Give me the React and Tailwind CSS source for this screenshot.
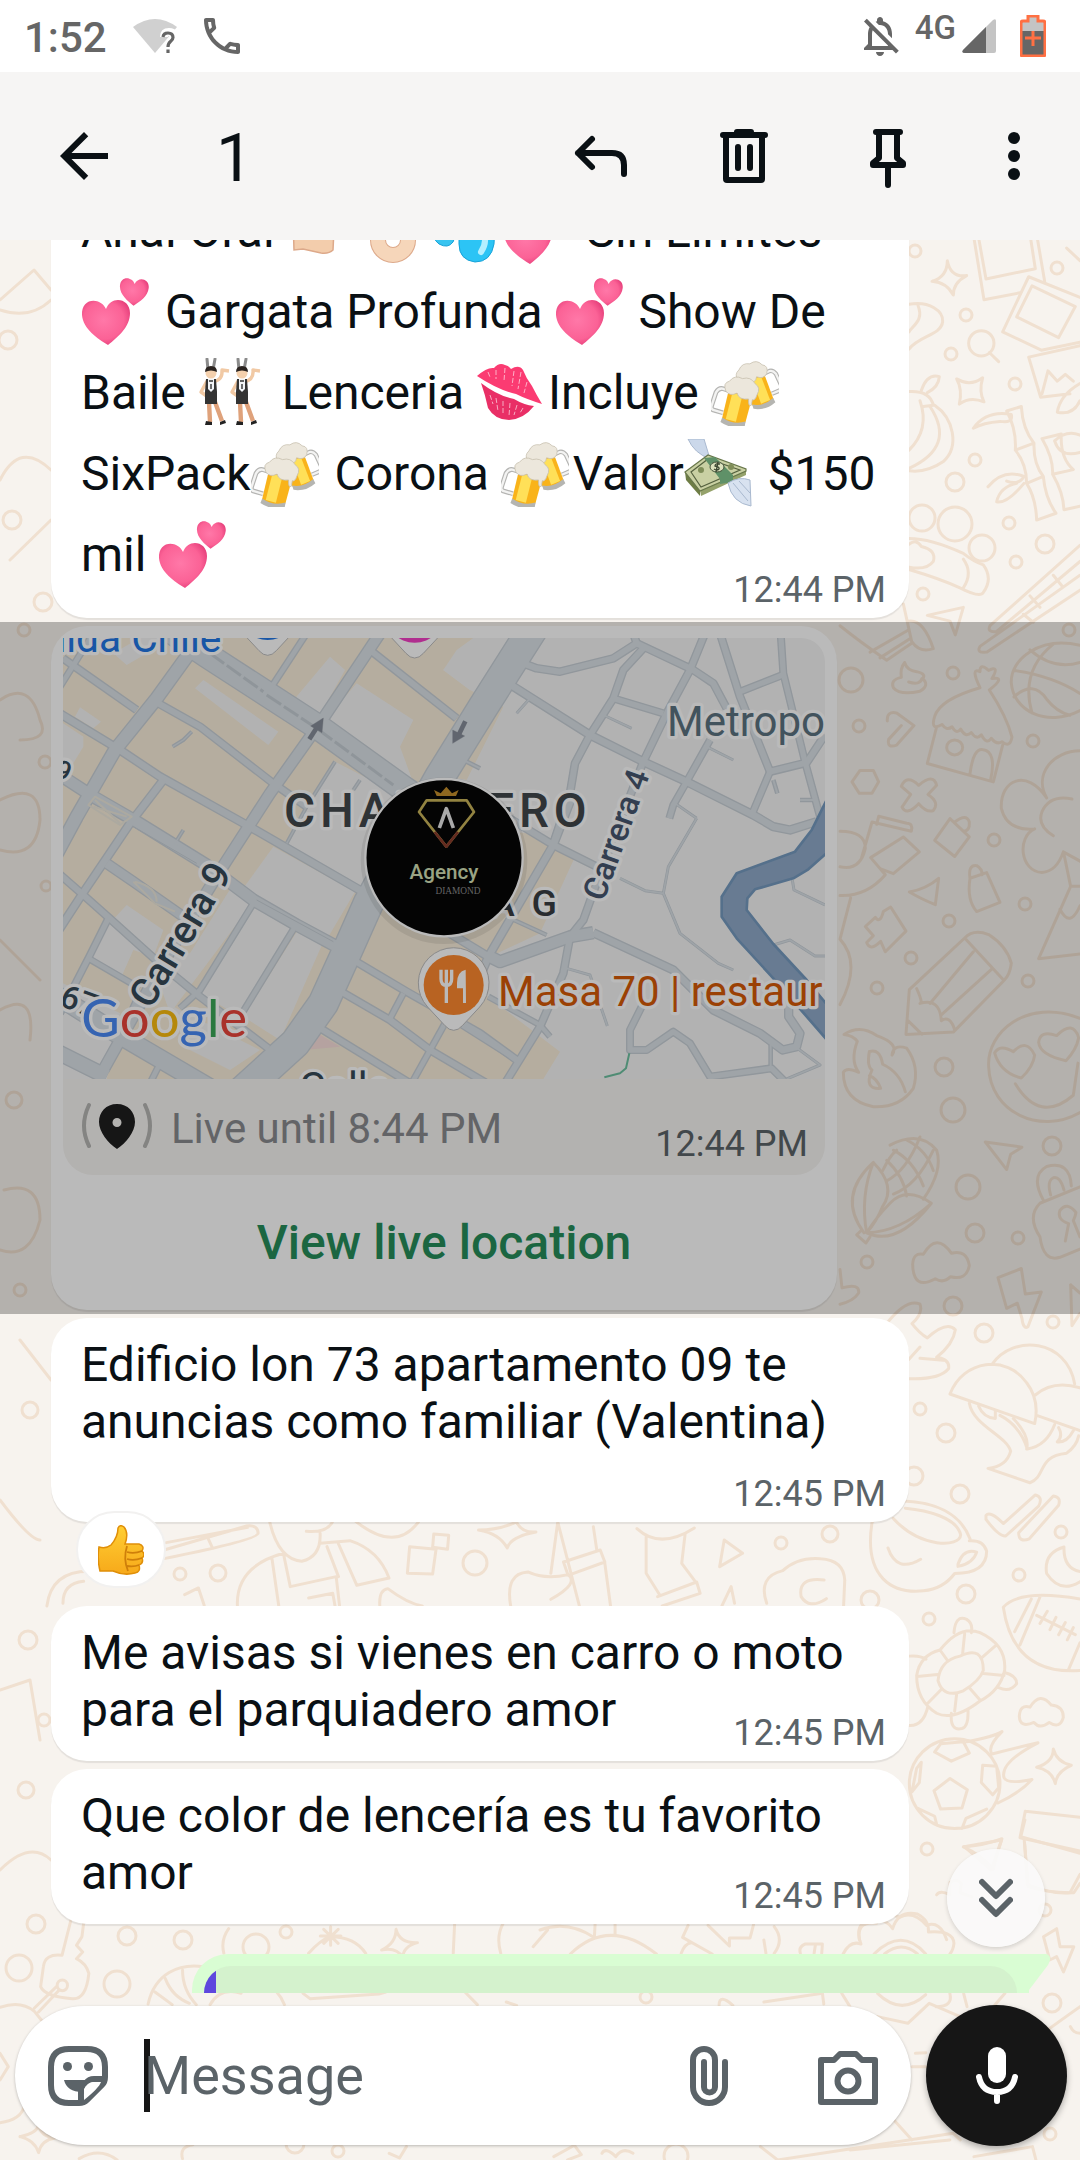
import { MdArrowBack, MdOutlineCall, MdOutlineNotificationsOff } from 'react-icons/md';

/* ---------- Emoji ---------- */

const HEART = 'M0 -10 C-5 -22 -25 -22 -24 -4 C-23 10 -8 20 2 26 C12 18 24 8 24 -6 C24 -21 5 -24 0 -10 Z';

function Emoji({ label, children }) {
  return (
    <svg role="img" aria-label={label} viewBox="0 0 68 68" className="inline-block h-[68px] w-[68px] mr-[4px] align-[-17px]">
      {children}
    </svg>
  );
}

function Hearts() {
  return (
    <Emoji label="two hearts">
      <defs>
        <radialGradient id="pink" cx="0.45" cy="0.45" r="0.6">
          <stop offset="0" stopColor="#ff78a8" />
          <stop offset="0.7" stopColor="#fb6296" />
          <stop offset="1" stopColor="#e63f7b" />
        </radialGradient>
      </defs>
      <path d={HEART} transform="translate(25 42)" fill="url(#pink)" />
      <path d={HEART} transform="translate(53 13) rotate(6) scale(.6)" fill="url(#pink)" />
    </Emoji>
  );
}

function Mug() {
  return (
    <>
      <path d="M9 10 L1 9 Q-3 9 -5 14 L-7 28 Q-8 33 -3 33 L6 34" fill="none" stroke="#b4b4b2" strokeWidth="5" />
      <path d="M9 10 L1 9 Q-3 9 -5 14 L-7 28 Q-8 33 -3 33 L6 34" fill="none" stroke="#f3f3f2" strokeWidth="2.5" />
      <path d="M8 6 L34 6 L31 40 Q19 46 6 40 Z" fill="#f9b31a" />
      <path d="M12 12 L23 12 L21 41 L10 40 Z" fill="#ffe058" />
      <path d="M6 39 Q19 45 31 39 L31 44 Q18 50 5 44 Z" fill="#b5b5b1" />
      <path d="M5 11 Q0 3 7 0 Q11 -8 20 -5 Q28 -9 34 -2 Q41 1 38 9 Q37 16 34 15 L34 21 Q31 24 30 15 Q20 18 17 11 Q10 16 5 11 Z" fill="#ece7dc" stroke="#c8c0af" strokeWidth=".8" />
    </>
  );
}

function Beers() {
  return (
    <Emoji label="clinking beer mugs">
      <g transform="translate(57 5) rotate(-17) scale(-.88 .9)"><Mug /></g>
      <g transform="translate(12 22) rotate(10) scale(.95)"><Mug /></g>
    </Emoji>
  );
}

function Dancer() {
  return (
    <>
      <path d="M7 12 L6 1 M12 12 L14 1" stroke="#8b8b8b" strokeWidth="3" strokeLinecap="round" />
      <path d="M12 24 Q22 22 21 12 L28 13 M6 23 L0 34 L7 39" fill="none" stroke="#f1c9a4" strokeWidth="3.4" strokeLinejoin="round" />
      <path d="M8 44 L9 64 M14 44 L21 63" stroke="#dfa27b" strokeWidth="4.4" />
      <circle cx="10" cy="15" r="5.5" fill="#f4d0ad" />
      <path d="M4 14 Q4 8 10 8 Q16 8 16 14 Q10 11 4 14 Z" fill="#2b2420" />
      <path d="M5 21 H15 L16 34 V46 H4 V34 Z" fill="#333" />
      <path d="M7 21 H13 V31 L10 34 L7 31 Z" fill="#f1f4f7" />
      <path d="M8 23 H12 M10 26 V31" stroke="#333" strokeWidth="1.4" />
      <path d="M4 67 L5 63 L11 64 V67 Z M19 67 L19 64 L24 62 L25 65 Z" fill="#222" />
    </>
  );
}

function Dancers() {
  return (
    <Emoji label="dancers with bunny ears">
      <g transform="translate(3 0)"><Dancer /></g>
      <g transform="translate(34 0)"><Dancer /></g>
    </Emoji>
  );
}

function Kiss() {
  return (
    <Emoji label="kiss mark">
      <path d="M1 18 Q11 9 18 10 Q23 4 29 7 Q33 8 35 11 Q43 6 47 12 Q50 20 56 28 Q60 36 66 46 Q50 41 40 36 Q22 32 1 18 Z" fill="#fb3b72" />
      <path d="M5 25 Q22 38 38 41 Q48 47 58 48 Q48 61 33 62 Q19 62 12 50 Q9 36 5 25 Z" fill="#e92f66" />
      <path d="M12 14 L14 19 M20 12 L20 21 M29 10 L28 23 M38 13 L36 28 M45 14 L42 31 M51 24 L48 35 M14 37 L17 46 M20 40 L22 53 M27 43 L27 57 M34 45 L33 58 M41 47 L38 57 M47 50 L44 55" stroke="#fff" strokeOpacity=".6" strokeWidth="1" strokeDasharray="5 2" />
    </Emoji>
  );
}

function Money() {
  return (
    <Emoji label="money with wings">
      <path d="M4 0 H20 L26 20 Q10 14 4 0 Z" fill="#cbd8ea" stroke="#a9b9cf" />
      <path d="M1 33 L16 51 L16 57 L2 41 Z" fill="#6e7d45" />
      <path d="M16 51 L62 31 L62 36 L17 57 Z" fill="#95a26b" />
      <path d="M1 33 L24 16 L62 30 L62 32 L16 52 Z" fill="#c9d0a3" stroke="#68774a" strokeWidth="1.2" />
      <path d="M7 33 L24 20 L56 31 L17 48 Z" fill="none" stroke="#55613f" strokeWidth="1.2" />
      <path d="M20 19 L31 18 L49 36 L49 43 L36 45 L36 40 Z" fill="#5f9168" />
      <ellipse cx="33" cy="28" rx="7" ry="5" fill="#dbe1bd" stroke="#45533a" />
      <path d="M36 25 Q31 24 31 27 Q36 28 35 30 Q33 32 30 30 M34 23 L32 33" fill="none" stroke="#3a4630" strokeWidth="1.3" />
      <circle cx="17" cy="31" r="3" fill="#7f8d58" /><circle cx="47" cy="28" r="3" fill="#7f8d58" />
      <path d="M44 44 Q55 37 66 41 L67 67 Q48 64 44 44 Z" fill="#d8e2f0" stroke="#a9b9cf" />
      <path d="M49 44 L64 62 M55 42 L66 54" stroke="#a9b9cf" />
    </Emoji>
  );
}

function Point() {
  return (
    <Emoji label="pointing right">
      <path d="M6 22 H40 L66 25 Q68 32 60 33 H47 L46 54 Q42 58 34 57 L16 53 L7 54 Z" fill="#f3cdac" stroke="#dda98a" strokeWidth="1.5" />
    </Emoji>
  );
}

function OkHand() {
  return (
    <Emoji label="ok hand">
      <path d="M22 4 L34 20 M40 1 L44 20 M58 4 L52 24" stroke="#f3cdac" strokeWidth="9" strokeLinecap="round" />
      <circle cx="34" cy="44" r="15" fill="none" stroke="#dda98a" strokeWidth="16" />
      <circle cx="34" cy="44" r="15" fill="none" stroke="#f6d6ba" strokeWidth="14" />
    </Emoji>
  );
}

function Droplets() {
  return (
    <Emoji label="sweat droplets">
      <path d="M36 6 Q66 28 63 48 Q60 66 44 66 Q28 64 28 48 Q27 34 36 6 Z" fill="#2cc4f5" stroke="#17a2d8" />
      <path d="M18 24 Q28 36 22 46 Q17 53 8 48 Q0 42 4 33 Z" fill="#38c4f0" stroke="#17a2d8" />
      <path d="M50 34 Q58 44 50 56" fill="none" stroke="#b5efff" strokeWidth="6" strokeLinecap="round" />
    </Emoji>
  );
}

function ThumbsUp() {
  return (
    <svg role="img" aria-label="thumbs up" viewBox="0 0 46 50" className="h-[50px] w-[46px]">
      <defs>
        <linearGradient id="thumb" x1="0" y1="0" x2="0" y2="1">
          <stop offset="0" stopColor="#ffcf33" />
          <stop offset="1" stopColor="#f7a91a" />
        </linearGradient>
      </defs>
      <path d="M1 22 Q8 24 13 20 Q20 12 20 3 Q22 -1 26 2 Q31 8 27 19 L41 19 Q47 21 44 26 Q48 30 44 33 Q46 38 41 40 Q43 47 37 48 Q26 51 15 46 L2 46 Q-1 34 1 22 Z" fill="url(#thumb)" stroke="#e08f08" strokeWidth="1.5" />
      <path d="M44 26 Q36 29 29 27 M44 33 Q36 36 29 34 M41 40 Q36 42 29 41 M29 21 Q25 34 30 46" fill="none" stroke="#cf7f0a" strokeWidth="1.8" />
    </svg>
  );
}

/* ---------- Wallpaper ---------- */

const DOTS = [
  [915, 251, 6], [1057, 268, 6], [966, 315, 6], [951, 354, 6], [1015, 384, 6], [975, 460, 6], [955, 482, 9],
  [922, 518, 13], [955, 524, 17], [982, 548, 13], [1009, 523, 6], [1045, 544, 9], [1016, 562, 6], [923, 594, 6],
  [851, 680, 12], [953, 673, 6], [1069, 630, 6], [859, 726, 6], [1033, 741, 6], [994, 840, 6], [949, 921, 6],
  [1025, 904, 6], [911, 958, 6], [877, 988, 6], [1028, 981, 6], [944, 1067, 9], [953, 1110, 12], [1052, 1146, 9],
  [968, 1187, 12], [975, 1233, 9], [1018, 1238, 6], [867, 1262, 6], [953, 1306, 9], [984, 1333, 9], [1053, 1322, 6],
  [920, 1409, 6], [946, 1433, 9], [960, 1494, 9], [1061, 1532, 6], [1019, 1575, 6], [966, 1594, 9], [929, 1619, 6],
  [870, 1600, 9], [914, 1476, 9], [927, 1849, 6], [1045, 1910, 6], [36, 1924, 9], [127, 1936, 9], [183, 1940, 9],
  [256, 1947, 13], [19, 1968, 13], [117, 1984, 13], [286, 1932, 6], [646, 1997, 6], [1052, 2003, 9], [1050, 2134, 6],
  [338, 2151, 6], [295, 2144, 9], [676, 2156, 12], [475, 1563, 12], [218, 1573, 8], [180, 1574, 6], [781, 1543, 6],
  [830, 1534, 8], [45, 762, 6], [46, 886, 5], [24, 630, 6], [12, 520, 9], [30, 1410, 8], [20, 1290, 6], [26, 1790, 8], [44, 1720, 6],
  [43, 602, 9], [8, 340, 9], [14, 1100, 8], [28, 1640, 9],
];

function Wallpaper() {
  return (
    <svg
      aria-hidden="true"
      viewBox="0 240 1080 1920"
      preserveAspectRatio="xMidYMin slice"
      className="absolute inset-0 h-full w-full [&_path]:[vector-effect:non-scaling-stroke]"
      fill="none"
      stroke="#f0e0d0"
      strokeWidth="3"
      strokeLinecap="round"
      strokeLinejoin="round"
    >
      {DOTS.map(([x, y, r], i) => <circle key={i} cx={x} cy={y} r={r} />)}
      {/* upper right: photos, bamboo, hut, ball, pencil, flame */}
      <g transform="translate(840 240) scale(.3333 .574)">
        <path d="M400 -10 L432 104 L540 92 M414 -10 L438 68 L586 50 L570 -10 M590 -10 L614 72" />
        <path d="M566 64 L720 100 M566 64 L488 160 L604 192 L720 178 M576 80 L706 116 L656 170 L530 134 Z" />
        <path d="M720 184 L566 204 L602 274 L690 268 M606 268 L624 228 L652 246 L676 234 L700 246 M720 250 Q660 270 652 300 Q700 306 720 280 M680 14 L720 36" />
        <path d="M322 36 Q332 66 380 62 Q340 74 340 96 Q320 74 276 72 Q322 64 322 36 Z M350 242 Q390 256 428 240 Q416 264 432 282 Q390 272 358 286 Q368 260 350 242 Z" />
        <path d="M462 180 A38 22 0 1 0 386 180 A38 22 0 1 0 462 180 M448 196 L476 212" />
        <path d="M207 112 C270 106 310 124 308 142 C304 166 240 166 207 190 M234 114 C252 140 220 148 207 160" />
        <path d="M207 264 Q270 262 280 288 L250 290 M244 262 Q262 232 298 238 Q296 256 262 266 M240 280 Q270 330 207 366 M270 290 Q350 360 207 398 M284 288 C340 310 360 360 310 386 Q260 406 207 402" />
        <path d="M400 328 Q440 296 514 304 Q520 320 480 316 Q430 318 400 328 Z M500 298 L544 290 Q548 330 582 354 L526 366 Q530 330 500 298 Z M526 366 Q560 390 560 424 L610 412 Q580 390 582 354 M560 424 Q588 450 590 488 L648 476 Q616 450 610 412 M444 430 Q490 398 552 412 Q536 428 500 420 M552 424 Q500 460 470 456 Q480 430 530 424" />
        <path d="M606 346 L664 338 Q660 380 700 400 L638 408 Q640 380 606 346 Z M638 408 Q670 440 672 470 L720 464 M644 350 Q680 330 720 340 M720 370 Q660 380 644 350" />
        <path d="M207 520 C260 520 310 530 370 546 Q400 560 430 566 Q460 590 430 614 Q420 624 360 606 Q300 590 207 574 M370 606 Q400 580 370 556 M207 530 Q230 520 244 534 Q290 540 280 560 Q260 576 207 570" />
        <path d="M720 532 L450 672 Q440 684 470 682 L720 560 M720 584 L420 708 Q408 720 440 718 L720 610 M570 620 L600 640 M640 584 L668 604 M550 652 L580 666 M262 654 L370 640 L346 688 L330 664 Z" />
        <path d="M0 672 Q60 700 140 732 L216 702 L190 634 M90 718 L204 680 M120 728 L212 694 M206 664 Q250 660 280 712 Q240 720 216 700" />
        <path d="M194 736 Q200 750 230 752 Q260 756 248 764 Q270 776 240 786 Q180 794 160 780 Q150 766 184 762 Q180 746 194 736 M206 770 Q240 776 246 764" />
        <path d="M284 830 Q300 800 420 780 Q390 744 420 752 Q420 736 446 750 Q480 740 456 764 Q500 760 448 784 Q500 830 516 866 Q510 886 486 874 Q470 880 454 868 Q440 880 424 862 Q410 872 394 858 Q376 868 362 852 Q350 862 336 848 Q320 856 306 844 Q270 856 284 830 Z M290 848 L262 912 L460 944 L488 880 M390 930 Q400 884 430 888 Q470 892 452 940 M368 884 A24 13 0 1 0 320 884 A24 13 0 1 0 368 884" />
        <path d="M720 706 C600 690 510 730 514 772 C520 820 620 850 720 820 M524 750 Q640 760 720 790 M570 714 Q640 750 720 736 M640 704 Q540 750 576 824 M522 796 Q580 766 620 800 Q650 822 690 828" />
        <path d="M142 838 Q140 820 170 824 L222 846 L170 880 Q140 886 146 870 L184 846 M36 944 L60 924 L100 924 L116 944 L96 964 L58 964 Z M184 952 Q200 930 236 950 Q280 928 290 950 L264 966 Q300 980 280 994 Q260 998 236 982 Q200 1004 186 988 L212 966 Z" />
        <path d="M620 972 C580 930 640 890 720 890 M620 972 C560 920 480 940 484 990 Q500 1030 584 1026 M584 1026 C530 1040 540 1100 606 1102 Q650 1100 670 1066 M640 1038 Q590 1020 606 996 Q630 966 696 974 M670 1066 L720 1082 M672 1070 L692 1126 L596 1252 L720 1244 M660 1166 Q690 1200 720 1160 M692 1126 L720 1126" />
        <path d="M284 1046 L330 1008 L388 1040 L344 1074 Z M344 1014 Q380 998 388 1014 Q390 1030 370 1030 M390 1112 L440 1102 L480 1154 L410 1170 Q380 1150 390 1112 Z M390 1112 Q384 1088 410 1090 Q428 1096 426 1106 M208 1136 Q260 1130 296 1112 L286 1158 Q250 1150 208 1136 Z M76 1196 L106 1180 Q120 1192 130 1170 L152 1162 L198 1204 L136 1240 L122 1222 Q90 1240 80 1224 L100 1212 Z" />
        <path d="M0 1030 Q76 1030 76 1060 Q60 1100 0 1092 M64 1078 L96 1014 L214 1030 Q220 1016 200 1016 L116 1004 L110 1018 M92 1076 L190 1040 L238 1066 L160 1104 L124 1096 M0 1142 Q80 1144 136 1106 L92 1076 M0 1218 L32 1146 M0 1218 Q66 1260 0 1332" />
        <path d="M198 1384 L208 1306 L374 1216 Q400 1200 446 1210 Q500 1230 514 1260 Q510 1280 492 1290 L340 1380 Z M374 1216 L492 1290 M230 1304 Q250 1330 240 1330 Q300 1320 304 1360 Q330 1350 344 1376 M270 1330 L400 1240 M304 1350 L456 1270 M204 1360 L246 1384" />
        <path d="M12 1384 Q60 1366 110 1386 Q180 1400 156 1420 Q160 1400 200 1408 Q240 1440 220 1478 Q180 1512 100 1510 Q10 1500 10 1450 Q20 1440 56 1450 Q30 1430 52 1396 Q40 1386 12 1384 M88 1414 Q120 1408 128 1436 Q180 1450 196 1484 M88 1414 Q80 1440 96 1446 Q70 1480 122 1478 Q110 1460 88 1456" />
        <path d="M720 1356 C560 1320 440 1380 446 1440 C450 1520 600 1560 720 1520 M464 1416 Q480 1400 520 1414 Q560 1390 584 1420 Q580 1440 544 1460 Q480 1450 464 1416 Z M596 1398 Q600 1376 650 1386 Q700 1358 716 1390 Q710 1410 678 1430 Q600 1420 596 1398 Z M526 1470 Q600 1540 700 1490 L714 1434" />
      </g>
      {/* lower right: corn, lock, mushroom, cup, turtle, football */}
      <g transform="translate(840 1140) scale(.3333 .51)">
        <path d="M72 182 Q-10 110 100 44 Q170 90 128 130 Q110 160 80 182 Q60 110 100 44 M80 182 Q170 210 274 124 Q200 90 150 124 Q110 150 80 182 Q180 180 274 124 M66 176 L50 186 L78 202 L90 190 M128 60 Q150 30 170 20 M150 10 Q240 -20 290 20 Q310 60 250 116 M140 40 Q190 70 200 110 M160 20 Q220 40 250 90 M200 0 Q260 20 280 60 M140 80 Q200 60 240 -6 M160 106 Q230 90 280 20" />
        <path d="M610 118 Q570 70 620 52 Q690 40 694 90 M632 108 Q620 80 640 74 Q660 70 672 98 M720 92 L600 124 Q560 150 600 190 Q610 240 660 230 L720 214 M676 198 L686 164 Q650 156 660 138 Q680 120 708 142 Q706 150 700 158 L720 190 M436 4 L546 14 L512 28 L500 58 Z" />
        <path d="M218 244 Q220 220 250 224 Q290 180 334 222 Q380 214 388 246 Q380 276 332 268 Q310 282 286 272 Q220 296 218 244 Z M474 270 L544 252 L556 302 L604 298 L564 366 Q550 372 546 350 L532 320 L500 330 Z M692 284 L720 300 M692 284 L696 364 L720 340" />
        <path d="M140 360 Q200 310 240 322 Q250 340 216 360 Q240 380 262 388 Q320 354 346 372 Q340 400 290 426 Q330 430 326 448 Q300 470 207 468 M207 430 L240 406 M240 428 L310 432 M0 254 L6 290 Q60 280 56 300 Q40 316 0 322" />
        <path d="M330 498 C370 430 500 420 560 476 Q600 510 584 556 Z M456 440 C520 380 680 390 704 478 M586 500 Q640 470 720 486 M590 540 L720 570 M388 516 C400 560 500 580 512 610 Q500 640 444 644 L570 672 C620 660 590 620 680 614 Q710 600 716 580 M416 522 Q430 544 466 546 L466 530 M480 540 Q540 560 562 606 Q620 600 644 558 M560 606 Q570 580 520 546 M656 564 Q670 580 652 592 Q680 594 700 570" />
        <path d="M96 750 C70 860 160 890 250 884 Q310 880 344 850 Q440 850 440 806 Q430 784 388 786 M96 750 L110 740 M190 708 C280 710 360 730 390 782 M160 742 C240 800 360 800 362 774 C350 740 260 726 196 722 M354 832 Q370 800 410 808 Q400 830 354 836 Z M144 800 Q170 850 242 822" />
        <path d="M438 736 Q450 726 490 752 L586 696 Q610 700 596 718 L498 776 Q480 780 438 744 Z M536 770 L640 698 Q664 700 656 716 L568 782 Q536 790 536 770 Z M672 798 Q610 810 620 850 Q660 890 720 866 M672 798 Q670 840 720 846" />
        <path d="M490 916 Q540 880 720 900 M490 916 Q520 1050 720 1040 M524 964 L574 900 M540 990 L600 896 M590 932 L706 970 M600 948 L622 924 M630 960 L648 936 M656 970 L676 946 M682 980 L700 956 M686 1038 L720 986" />
        <path d="M230 1050 Q240 1010 300 1000 Q360 950 420 966 Q500 990 494 1040 Q480 1080 420 1100 Q340 1140 290 1124 Q230 1100 230 1050 Z M294 1060 Q300 1020 360 1012 Q430 990 430 1040 Q420 1060 370 1080 Q310 1096 294 1060 Z M232 1052 L292 1048 M300 1000 L324 1022 M374 968 L368 1006 M466 992 L424 1016 M492 1050 L430 1046 M420 1098 L388 1074 M344 1120 L350 1086 M264 1104 L306 1076 M342 966 Q346 930 380 940 Q400 948 394 966 M494 1044 Q530 1050 530 1066 Q510 1084 476 1074 M334 1124 Q330 1160 366 1154 Q386 1150 384 1118 M207 1012 Q240 1010 258 1018 M207 1148 Q250 1150 264 1110" />
        <path d="M208 1262 A136 88 0 1 0 480 1262 A136 88 0 1 0 208 1262 M282 1276 L330 1252 L382 1274 L366 1310 L302 1312 Z M284 1200 L302 1184 L370 1180 L388 1202 L334 1218 Z M428 1226 L470 1228 L476 1270 L458 1284 L424 1260 Z M244 1220 L230 1232 L216 1278 L238 1260 Z M232 1310 L284 1326 L290 1342 M366 1350 L378 1330 L440 1312 M380 1180 Q460 1170 486 1160 Q440 1190 456 1204 Q540 1190 594 1182 Q480 1220 492 1250 Q500 1264 576 1254 Q540 1280 474 1300" />
        <path d="M538 1130 Q540 1106 570 1112 Q600 1080 634 1108 Q670 1110 670 1132 Q660 1156 628 1142 Q600 1156 582 1142 Q540 1154 538 1130 Z M640 1194 Q650 1220 694 1226 Q650 1238 646 1262 Q636 1236 590 1230 Q640 1220 640 1194 Z M556 1316 L720 1328 M556 1316 L540 1368 L720 1394 M554 1380 L562 1460 Q640 1480 690 1476 L720 1440 M370 1386 Q430 1384 486 1370 Q470 1400 460 1430 Q420 1400 370 1386 Z M290 1480 Q300 1470 330 1480 L330 1456 Q350 1446 364 1458 L360 1476 L396 1484 M58 1568 Q50 1530 110 1536 Q120 1510 180 1524 Q220 1510 260 1540 Q300 1530 320 1568" />
      </g>
      {/* between the third and fourth bubbles */}
      <g transform="translate(40 1320) scale(.574 .3333)">
        <path d="M216 690 L360 618 Q380 614 380 640 Q380 660 216 716 M220 668 L362 622 M292 652 L300 682 M400 604 C410 680 430 720 456 724 Q490 710 488 640 M464 634 Q500 640 510 604 M550 604 Q620 700 660 604 M488 670 L540 662 Q590 690 608 774 L552 796 L520 672 M500 680 L520 770 M344 860 Q340 740 424 700 L436 800 L516 770 L522 860 M404 714 L416 858 M468 834 L510 820 L514 858 M592 858 Q590 810 606 806 Q640 850 666 858 M252 824 L276 804 L286 856 M644 680 L690 688 L684 762 L640 760 Z M686 642 L712 646 L710 688 L684 682 Z M764 630 Q800 630 830 606 Q840 640 864 636 Q820 650 814 684 Q800 640 764 630 Z M902 606 L890 760 M902 606 L940 860 M912 726 L976 690 L984 726 L920 766 Z M964 620 L970 690 M1040 626 Q1080 690 1140 624 M1056 650 L1056 760 L1080 826 M1124 640 L1118 730 L1144 790 M1076 830 L1144 786 L1150 820 L1084 858 M984 730 L994 858 M820 858 Q810 760 850 756 Q880 780 920 764 Q940 790 890 838 M1192 660 L1224 700 L1184 740 Z M1266 850 Q1250 770 1294 752 Q1320 710 1360 716 Q1400 720 1402 780 L1400 858 M1366 780 Q1320 770 1326 830 Q1340 870 1370 836 M1188 858 L1204 800 L1210 850 M12 858 Q20 750 90 754 M40 850 Q40 790 76 784" />
      </g>
      {/* around the composer */}
      <g transform="translate(0 1920) scale(.3444 .3333)">
        <path d="M206 0 L180 106 Q130 100 126 140 L118 200 Q130 230 210 236 Q250 240 258 160 Q250 130 222 116 L240 96 L222 76 L238 50 L244 0 M172 210 L112 276 M164 200 L100 264 M196 196 A15 16 0 1 0 166 196 A15 16 0 1 0 196 196 M0 262 Q60 240 100 274 L120 300 M0 400 L24 440 L0 480 M0 608 Q60 600 70 560 M58 650 Q106 640 112 616 Q120 650 160 654 Q120 660 112 698 Q100 660 58 650 M230 716 Q290 680 340 720" />
        <path d="M430 252 C450 160 520 130 590 140 M450 216 L500 254 M480 176 Q500 230 550 250 M530 150 Q530 210 570 254 M610 254 Q640 200 700 220 M760 180 Q810 210 826 254 M664 26 Q640 60 650 100 M896 100 Q930 60 960 50 Q1030 50 1062 100 M960 20 L960 76 M930 48 H990 M940 28 L982 70 M940 70 L982 28 M1150 28 Q1160 70 1212 68 Q1170 80 1170 112 Q1150 80 1108 90 Q1150 70 1150 28 M1320 12 L1316 100 M1460 12 Q1440 50 1454 100 M1548 80 L1590 30 M880 220 L900 236 L1100 222 L1120 216 M1350 216 L1386 254 M1470 246 L1500 256 M530 716 Q520 680 560 674 M1130 700 L1160 714 L1180 680" />
      </g>
      <g transform="translate(540 1820) scale(.3444 .3333)">
        <path d="M0 330 Q80 300 156 352 M88 402 Q200 290 338 402 M160 312 L158 350 M218 312 V346 M430 316 L414 352 L500 402 M488 316 L550 378 V354 H610 L620 314 M650 360 L656 400 M680 320 Q710 360 680 400 M410 400 Q420 370 440 368 M820 372 H770 Q750 380 756 400 M800 372 L796 400 M820 372 L818 400" />
        <path d="M880 402 Q900 360 932 372 Q910 310 960 300 Q1000 290 1024 326 Q1040 270 1096 282 Q1130 300 1128 336 Q1200 330 1202 370 Q1200 390 1190 402 M970 402 Q1050 320 1120 402 M1000 402 Q1050 360 1096 402 M876 520 L900 560 M980 520 Q1050 590 1120 524 M1190 520 Q1200 560 1150 560 M980 590 L1068 610 L1130 550 L1220 590 M1230 520 L1240 560 M1350 520 L1320 556" />
        <path d="M1462 350 L1500 326 L1510 380 L1550 380 L1520 456 L1500 410 L1480 420 Z M1408 0 L1396 50 L1568 100 M1406 60 L1418 200 Q1480 220 1550 218 L1568 190 M1232 80 L1340 60 L1310 150 Z M1568 560 Q1500 610 1460 640 M1540 620 Q1550 640 1568 640 M1090 700 L1120 698 M1080 740 L1120 740 M1010 880 L1080 960 M690 1020 L1200 940 L1220 960 M900 990 L1190 960 M1260 1010 L1430 980 L1440 1020 M40 1010 L100 976 L120 1004 L80 1020 M180 1000 Q190 980 220 1010 Q240 980 270 1000 M640 980 L690 1020 M560 556 Q520 520 520 556 M650 546 L820 520 L824 552" />
      </g>
      {/* left sliver */}
      <path d="M0 300 L34 270 L51 290 M0 310 Q30 320 51 300 M0 480 Q20 440 51 470 M10 560 L51 520 M0 700 Q30 680 40 720 Q50 740 20 740 M0 800 Q40 780 40 820 Q36 860 0 850 M0 940 L40 980 M0 1010 Q36 990 30 1040 M4 1190 Q40 1180 40 1220 Q30 1260 0 1250 M20 1340 L51 1380 M0 1500 Q30 1540 40 1540 M0 1690 L30 1680 L40 1740 M0 1870 Q30 1840 51 1860" />
    </svg>
  );
}

/* ---------- Map ---------- */

const MAJOR_ROADS = [
  [44, 'M500 40 L440 110 L350 235 L225 390 L110 590 L40 720'],
  [38, 'M1040 10 L850 295 L690 520 L545 745 L380 1010 L190 1350'],
  [80, 'M360 10 L500 105 L840 325 L1090 505 L1230 600'],
  [95, 'M1495 0 L1330 260 L1200 470 L985 850 L925 985 L850 1150 L765 1270 L600 1420'],
  [60, 'M40 1120 L230 1240 L520 1410'],
  [50, 'M40 1290 L200 1370'],
];

const MINOR_ROADS = [
  [26, 'M69 115 L290 270'],
  [28, 'M50 275 L240 390 L360 470 L620 615 L985 825'],
  [26, 'M355 250 L480 320 L700 490 L800 560'],
  [40, 'M60 465 L160 530 L290 605 L500 735 L640 840 L770 915 L900 985'],
  [26, 'M50 755 L130 825 L205 892 L370 1040 L480 1130 L685 1285'],
  [34, 'M200 730 L280 785 L430 890'],
  [28, 'M370 480 L270 610 L125 825 L50 940'],
  [24, 'M205 895 L145 1015 L60 1180'],
  [22, 'M640 850 L480 1110 L420 1165'],
  [22, 'M765 920 L600 1190'],
  [22, 'M145 1015 L300 1105'],
  [22, 'M800 40 L695 200'],
  [26, 'M990 90 L1250 295'],
  [12, 'M885 425 L800 560 L740 670 M960 480 L940 510 M455 335 L430 360 L398 380 M430 630 L405 670 L440 690'],
  [22, 'M160 40 L60 200 M290 1140 L180 1377 M360 1330 L330 1390'],
  [26, 'M940 1020 L1100 1115 L1320 1240 L1430 1320'],
  [26, 'M895 1110 L1050 1200 L1170 1290 L1340 1390'],
  [26, 'M825 1215 L1110 1390'],
  [22, 'M1090 1120 L1045 1205 M1215 1210 L1115 1390'],
  [28, 'M1180 910 L1345 1010 L1320 1070 M1600 520 L1540 675 L1345 1010'],
  [26, 'M1400 590 L1540 675 L1670 740'],
  [40, 'M1350 1010 L1380 1025 L1590 950 L1660 938'],
  [28, 'M1660 938 L1900 1050 L2020 1170 L2160 1240 L2228 1290 L2270 1280 L2280 1240 L2246 1190 V1140'],
  [26, 'M1590 950 L1570 1060 L1500 1220 L1395 1390'],
  [20, 'M1345 1130 L1500 1215 L1530 1250 M1240 1200 L1430 1320'],
  [26, 'M1450 130 L1490 145 L1560 155 L1720 115 L1790 70 L1780 40'],
  [28, 'M1405 190 L1650 345 L1810 425 L1940 485 L2140 585 L2200 620 L2250 630 L2330 605'],
  [26, 'M1780 65 L1960 150 L2020 190 L2060 265'],
  [26, 'M1810 85 L1750 150 L1720 235 L1650 345 L1605 430 L1590 520 L1540 670'],
  [24, 'M1720 235 L1870 280'],
  [26, 'M1995 40 L1950 150 L1880 280 L1810 425 L1680 760 L1630 900 L1590 950'],
  [26, 'M2040 40 L2100 230 L2190 455 L2300 428 L2355 345'],
  [24, 'M2222 40 L2230 160 L2295 425 L2340 590'],
  [24, 'M2100 215 L2235 162 M2190 455 L2135 585 M2010 360 L1940 485 L1900 555 L1888 595'],
  [9, 'M1970 595 L1885 740 L1870 820 L1920 940 L2035 1030 L2080 1050 M1740 775 L1815 812 L1870 820 M2000 380 L2080 420 M1690 285 L1775 325 M1470 235 L1430 280 M1580 1045 L1650 1065 L1702 1218 M1905 550 L1970 595'],
  [9, 'M2257 780 L2262 810 L2355 855 M2200 975 L2250 960 L2325 1008 H2360 M2272 1285 L2340 1335 L2240 1377'],
  [14, 'M1260 415 L1320 445 M2280 540 H2320 M2200 480 L2212 520 M2192 1275 V1345 M1400 890 L1520 945'],
  [24, 'M1810 1150 L1770 1230 V1290 H1820 L1900 1235 L1950 1270 L2010 1370 L2195 1345 L2240 1390'],
];

const ROADS = [...MINOR_ROADS, ...MAJOR_ROADS];

function MapPin({ x, y, fill, children }) {
  return (
    <g transform={`translate(${x} ${y})`}>
      <path d="M0 136 Q-14 136 -26 122 L-78 66 A106 106 0 1 1 78 66 L26 122 Q14 136 0 136 Z" fill="#fff" stroke="#bdbdbd" strokeWidth="3" />
      <circle r="90" fill={fill} />
      {children}
    </g>
  );
}

function LocationMap() {
  return (
    <svg
      role="img"
      aria-label="Map of Chapinero"
      viewBox="69 54 2286 1323"
      className="block w-full rounded-tr-[24px] font-['Roboto',sans-serif] font-medium"
      fill="none"
      strokeLinejoin="round"
    >
      <rect x="69" y="54" width="2286" height="1323" fill="#f5f5f5" />
      <g fill="#f8edda">
        <path d="M69 54 H1300 L1250 90 L1210 150 L1290 210 L1390 260 L1280 480 L1230 470 L1180 620 L1470 640 L1610 700 L1500 940 L1350 1010 L1330 1120 L1560 1295 L1510 1377 H69 Z" />
      </g>
      <g fill="#f5f5f5">
        <path d="M870 110 L915 150 L840 285 L768 232 Z" />
        <path d="M950 190 L1120 300 L1080 380 Q1095 420 1120 490 L855 300 Z" />
        <path d="M490 180 L715 335 L685 375 L465 205 Z" />
        <path d="M885 425 L1090 530 L1000 820 L740 680 L800 560 Z" />
        <path d="M700 680 L945 815 L865 950 L610 805 Z" />
        <path d="M575 800 L640 845 L390 1180 L330 1010 L450 1000 Z" />
        <path d="M640 860 L760 920 L600 1190 L480 1120 Z M780 920 L850 965 L720 1260 L610 1190 Z" />
        <path d="M260 855 L370 930 L340 1010 L280 990 L240 1080 L150 1010 L190 930 Z" />
        <path d="M69 310 L130 350 L130 380 L69 480 Z M120 262 L183 305 L160 325 L105 290 Z" />
        <path d="M400 1160 L660 1290 L570 1350 L450 1290 Z M69 1090 L240 1180 L200 1377 H69 Z" />
        <path d="M1300 54 H1420 L1290 210 L1210 150 Z M220 100 L300 54 H400 L260 135 Z" />
      </g>
      <path d="M825 1235 L900 1280 L790 1290 Z" fill="#f8dedc" />
      {ROADS.map(([w, d]) => <path key={d} d={d} stroke="#c7cfd6" strokeWidth={w} />)}
      {ROADS.map(([w, d]) => <path key={d} d={d} stroke="#dae1e6" strokeWidth={w > 10 ? w - 8 : w - 4} />)}
      <path d="M510 100 L670 215 M680 225 L830 325 L1060 495" stroke="#c5cdd3" strokeWidth="9" strokeDasharray="52 10" />
      <path d="M280 620 L470 730 M650 840 L880 965" stroke="#c7cfd6" strokeWidth="3" />
      <path d="M165 530 L275 590 L240 615 L145 555 Z M165 540 L240 610 M260 590 L160 560 M280 785 L345 850 L405 875 M285 785 Q350 800 350 845" stroke="#ece8dc" strokeWidth="6" />
      <path d="M2370 520 L2315 630 L2265 695 L2090 760 L2045 830 V890 L2090 955 L2200 1075 L2370 1270 V1165 L2300 1080 L2200 972 L2120 870 L2122 835 L2145 808 L2260 775 L2305 748 L2370 690 Z" fill="#8fa9c8" stroke="#759abf" strokeWidth="8" />
      <path d="M1768 1300 L1758 1345 L1740 1360 L1693 1372" stroke="#6dc0a0" strokeWidth="6" />
      <g fill="#868c98" stroke="#868c98">
        <path d="M808 358 L832 320" strokeWidth="14" /><path d="M850 294 L812 318 L846 338 Z" />
        <path d="M1276 304 L1256 345" strokeWidth="14" /><path d="M1238 370 L1238 330 L1274 348 Z" />
      </g>

      <g stroke="#fff" strokeWidth="20" className="[paint-order:stroke]">
        <text x="544" y="97" textAnchor="end" fontSize="122" fontWeight="400" fill="#2276e4">Avenida Chile</text>
        <text x="732" y="620" fontSize="143" fill="#41474a" className="tracking-widest">CHAPINERO</text>
        <text x="1562" y="888" textAnchor="end" fontSize="112" fill="#393d42" className="tracking-widest">ZONA G</text>
        <text transform="translate(421 944) rotate(-59)" y="40" textAnchor="middle" fontSize="117" fill="#364957">Carrera 9</text>
        <text transform="translate(1728 644) rotate(-70)" y="34" textAnchor="middle" fontSize="99" fill="#46566e">Carrera 4</text>
        <text x="1881" y="348" fontSize="126" fontWeight="400" fill="#5b7280">Metropo</text>
        <text x="1374" y="1157" fontSize="126" fontWeight="400" fill="#d55a08">Masa 70 | restaur</text>
        <text x="778" y="1444" fontSize="122" fontWeight="400" fill="#364957">Calle</text>
        <text transform="translate(54 1156) rotate(20)" fontSize="98" fill="#364957">67</text>
        <text transform="translate(40 470) rotate(20)" fontSize="80" fill="#364957">9</text>
        <text x="124" y="1252" fontSize="158" fontWeight="400" className="font-['Lato',sans-serif]">
          <tspan fill="#4a8af4">G</tspan><tspan fill="#e8453c">o</tspan><tspan fill="#f9bb10">o</tspan><tspan fill="#4a8af4">g</tspan><tspan fill="#3aa757">l</tspan><tspan fill="#e8453c">e</tspan>
        </text>
      </g>

      <MapPin x="683" y="-30" fill="#2276e4" />
      <MapPin x="1124" y="-22" fill="#f23fc4" />
      <MapPin x="1241" y="1095" fill="#fd882f">
        <path d="M-38 -46 V-18 Q-38 0 -22 2 V54 M-22 -46 V0 M-6 -46 V-18 Q-6 0 -22 2" stroke="#fff" strokeWidth="10" />
        <path d="M36 -46 Q10 -40 10 -6 V10 H28 V54 H37 Z" fill="#fff" />
      </MapPin>

      {/* sender's photo */}
      <circle cx="1212" cy="722" r="250" fill="#000" fillOpacity=".08" />
      <circle cx="1212" cy="713" r="236" fill="#060606" stroke="#fff" strokeWidth="7" />
      <path d="M1190 528 L1182 510 L1202 520 L1219 500 L1236 520 L1256 510 L1248 528 Z" fill="#c58f2c" />
      <path d="M1160 541 H1280 L1302 576 L1219 680 L1137 576 Z" stroke="#c9b45a" strokeWidth="8" />
      <path d="M1184 636 L1219 680 L1254 636" stroke="#8a3c2c" strokeWidth="8" />
      <path d="M1198 624 L1219 566 L1240 624" stroke="#e8e8e8" strokeWidth="11" />
      <text x="1212" y="778" textAnchor="middle" fontSize="62" fill="#d3e0b6">Agency</text>
      <text x="1254" y="822" textAnchor="middle" fontSize="28" fontWeight="400" fill="#8a8a8a" className="font-['Liberation_Serif',serif]">DIAMOND</text>
    </svg>
  );
}

/* ---------- Messages ---------- */

function Time({ children, className = '' }) {
  return <time className={`block self-end pr-[23px] text-4xl leading-[42px] text-[#5b6368] ${className}`}>{children}</time>;
}

function Bubble({ time, timeClass = '-mt-[26px]', textClass = 'leading-[57px]', children, reaction }) {
  return (
    <div className="px-[51px] py-1">
      <div className="relative flex w-[858px] max-w-full flex-col rounded-[36px] bg-white pt-[18px] pb-[7px] shadow-[0_2px_1px_rgba(0,0,0,0.08)]">
        <p className={`pl-[30px] text-5xl text-[#0a1014] ${textClass}`}>{children}</p>
        <Time className={timeClass}>{time}</Time>
        {reaction}
      </div>
    </div>
  );
}

function LiveLocation() {
  return (
    <div className="relative px-[51px] py-1">
      <div className="w-[786px] max-w-full rounded-[36px] bg-white p-3 pb-0 shadow-[0_2px_1px_rgba(0,0,0,0.08)]">
        <LocationMap />
        <div className="flex h-24 items-start justify-between rounded-b-[30px] bg-[#f6f4f2] pr-[17px] pl-[18px]">
          <div className="flex items-center gap-[18px] pt-[23px]">
            <svg viewBox="0 0 72 54" className="h-[54px] w-[72px]" fill="none" aria-hidden="true">
              <path d="M8 3 Q-2 24 8 44 M64 3 Q74 24 64 44" stroke="#b5b5b3" strokeWidth="4" strokeLinecap="round" />
              <path fillRule="evenodd" d="M36 2 C25 2 18 10 18 20 C18 30 27 41 36 47 C45 41 54 30 54 20 C54 10 47 2 36 2 Z M36 16 A4.5 4.5 0 1 1 36 25 A4.5 4.5 0 1 1 36 16 Z" fill="#1f1f1f" />
            </svg>
            <span className="text-[42px] leading-[54px] text-[#888a8e]">Live until 8:44 PM</span>
          </div>
          <time className="pt-11 text-4xl leading-[42px] text-[#5b6368]">12:44 PM</time>
        </div>
        <button type="button" className="block h-[135px] w-full text-5xl font-medium text-[#258d5a]">View live location</button>
      </div>
      <div className="pointer-events-none absolute inset-0 bg-black/27" />
    </div>
  );
}

/* ---------- Bars ---------- */

function StatusBar() {
  return (
    <div className="flex h-[72px] items-center justify-between bg-white pr-[34px] pl-6 text-[#666]">
      <div className="flex items-center">
        <span className="pt-1 text-[42px] leading-[48px] font-medium">1:52</span>
        <svg viewBox="0 0 44 34" className="ml-[26px] h-[34px] w-[44px]" aria-hidden="true">
          <path d="M0 8 Q22 -8 44 8 L22 34 Z" fill="#d0d0d0" />
          <path d="M31 18 Q31 13 36 13 Q41 13 41 18 Q41 20 38 22.5 Q35 25 35 28 M35 31 V34" fill="none" stroke="#fff" strokeWidth="8" />
          <path d="M30 18 Q30.5 14 35 14 Q40 14 40 18.500 Q40 20.500 37.500 22.500 Q35 24.500 35 28 M35 30.500 V34" fill="none" stroke="#666" strokeWidth="3.2" />
        </svg>
        <MdOutlineCall className="ml-[21px] h-12 w-12" />
      </div>
      <div className="flex items-center">
        <MdOutlineNotificationsOff className="h-12 w-12" />
        <span className="ml-[11px] pb-4 text-[33px] leading-8 font-medium">4G</span>
        <svg viewBox="0 0 34 34" className="ml-[6px] h-[34px] w-[34px]" aria-hidden="true">
          <path d="M34 2 V32 Q34 34 32 34 H3 Q-1 34 1 31 L31 1 Q34 -1 34 2 Z" fill="#c4c4c4" />
          <path d="M24 8 V34 H3 Q-1 34 1 31 Z" fill="#666" />
        </svg>
        <svg viewBox="0 0 26 42" className="ml-6 h-[42px] w-[26px]" aria-hidden="true">
          <path d="M8 1 H18 V5 H23 Q25 5 25 7 V39 Q25 41 23 41 H3 Q1 41 1 39 V7 Q1 5 3 5 H8 Z" fill="#c4c4c4" />
          <path d="M2 16 H24 V40 H2 Z" fill="#666" />
          <path d="M8 1 H18 V6 H23 Q25 6 25 8 V39 Q25 41 23 41 H3 Q1 41 1 39 V8 Q1 6 3 6 H8 Z M13 16 V31 M5 23 H21" fill="none" stroke="#ff7043" strokeWidth="3" />
        </svg>
      </div>
    </div>
  );
}

function ActionIcon({ label, children, className = 'w-36' }) {
  return (
    <button type="button" aria-label={label} className={`flex h-36 items-center justify-center ${className}`}>
      <svg viewBox="0 0 72 72" className="h-[72px] w-[72px]" fill="none" stroke="currentColor" strokeWidth="6" strokeLinecap="round" strokeLinejoin="round">
        {children}
      </svg>
    </button>
  );
}

function SelectionBar() {
  return (
    <header className="flex h-[168px] items-center bg-[#f6f5f4] pr-3 pl-12 text-[#0a1014]">
      <button type="button" aria-label="Back"><MdArrowBack className="h-[72px] w-[72px]" /></button>
      <span className="ml-[96px] pt-[6px] text-[66px] leading-[72px]">1</span>
      <div className="ml-auto flex">
        <ActionIcon label="Reply">
          <path d="M28 19 L14 33 L28 47 M14 33 H48 Q60 33 60 45 V54" />
        </ActionIcon>
        <ActionIcon label="Delete">
          <path d="M15 15 H57 M29 12 H43 M18 15 V59 Q18 60 19 60 H53 Q54 60 54 59 V15 M30 27 V48 M42 27 V48" />
        </ActionIcon>
        <ActionIcon label="Pin">
          <path d="M24 12 H48 M27 12 V38 L21 43 V45 H51 V43 L45 38 V12 M36 45 V65" />
        </ActionIcon>
        <ActionIcon label="More options" className="w-[108px]">
          <g fill="currentColor" stroke="none">
            <circle cx="36" cy="18" r="6" /><circle cx="36" cy="36" r="6" /><circle cx="36" cy="54" r="6" />
          </g>
        </ActionIcon>
      </div>
    </header>
  );
}

function Composer() {
  return (
    <form className="relative flex items-center gap-[15px] pt-3 pr-[13px] pb-[14px] pl-[15px]">
      <div className="flex h-[139px] flex-1 items-center rounded-full bg-white px-[33px] text-[#5b6368] shadow-[0_1px_3px_rgba(0,0,0,0.25)]">
        <button type="button" aria-label="Stickers">
          <svg viewBox="0 0 60 60" className="h-[60px] w-[60px]" fill="none" stroke="currentColor" strokeWidth="6" strokeLinejoin="round">
            <path d="M21 3 H39 Q57 3 57 21 V31 Q57 36 54 39 L39 54 Q36 57 31 57 H21 Q3 57 3 39 V21 Q3 3 21 3 Z" />
            <path d="M57 33 H46 Q41 33 38 37 H20 M33 57 V42" />
            <path d="M16 34 H42 L34 46 Q19 46 16 34 Z" fill="currentColor" stroke="none" />
            <path d="M36 52 Q35 37 45 36 H53 Q51 42 36 54 Z" fill="#fff" stroke="none" />
            <circle cx="19.500" cy="20.500" r="4.500" fill="currentColor" stroke="none" />
            <circle cx="40.500" cy="20.500" r="4.500" fill="currentColor" stroke="none" />
          </svg>
        </button>
        <div className="relative ml-9 flex h-[73px] flex-1 items-center">
          <span className="absolute inset-y-0 left-0 w-[6px] bg-[#161616]" />
          <input
            type="text"
            aria-label="Message"
            placeholder="Message"
            className="relative w-full min-w-0 bg-transparent text-[54px] leading-[66px] outline-none placeholder:text-[#5b6368]"
          />
        </div>
        <button type="button" aria-label="Attach">
          <svg viewBox="0 0 38 60" className="h-[60px] w-[38px]" fill="none" stroke="currentColor" strokeWidth="6" strokeLinecap="round">
            <path d="M35 16 V41 A16 16 0 0 1 3 41 V14 A11 11 0 0 1 25 14 V41 A5.500 5.500 0 0 1 14 41 V16" />
          </svg>
        </button>
        <button type="button" aria-label="Camera" className="ml-[90px] pt-1">
          <svg viewBox="0 0 60 54" className="h-[54px] w-[60px]" fill="none" stroke="currentColor" strokeWidth="6" strokeLinejoin="round">
            <path d="M3 9 H16 L22 3 H38 L44 9 H57 V51 H3 Z" />
            <circle cx="30" cy="30" r="10.500" />
          </svg>
        </button>
      </div>
      <button type="button" aria-label="Record voice message" className="flex h-[141px] w-[141px] items-center justify-center rounded-full bg-[#161616] shadow-[0_3px_6px_rgba(0,0,0,0.3)]">
        <svg viewBox="0 0 42 58" className="h-[58px] w-[42px]" fill="none">
          <rect x="12" y="0" width="18" height="36" rx="9" fill="#fff" />
          <path d="M3 30 Q6 45 21 45 Q36 45 39 30 M21 45 V54" stroke="#fff" strokeWidth="6" strokeLinecap="round" />
        </svg>
      </button>
    </form>
  );
}

export default function App() {
  return (
    <div className="flex h-screen flex-col overflow-hidden bg-[#f7f3ee] font-['Roboto',sans-serif]">
      <StatusBar />
      <SelectionBar />
      <div className="relative flex min-h-0 flex-1 flex-col">
        <Wallpaper />
        <main className="relative min-h-0 flex-1 overflow-hidden">
          {/* the thread is scrolled, so the first bubble starts under the header */}
          <div className="-mt-[72px]">
            <Bubble time="12:44 PM" textClass="leading-[81px] whitespace-nowrap">
              Anal Oral <Point /><OkHand /><Droplets /><Hearts /> Sin Limites<br />
              <Hearts /> Gargata Profunda <Hearts /> Show De<br />
              Baile <Dancers /> Lenceria <Kiss />Incluye <Beers /><br />
              SixPack<Beers /> Corona <Beers />Valor<Money /> $150<br />
              mil <Hearts />
            </Bubble>
            <LiveLocation />
            <Bubble
              time="12:45 PM"
              timeClass="mt-[23px]"
              reaction={
                <button type="button" aria-label="Reactions" className="absolute -bottom-[66px] left-[25px] flex h-[77px] w-[90px] items-center justify-center rounded-full border-2 border-[#f2f1f0] bg-white">
                  <ThumbsUp />
                </button>
              }
            >
              Edificio lon 73 apartamento 09 te<br />anuncias como familiar (Valentina)
            </Bubble>
            <div className="h-[76px]" />
            <Bubble time="12:45 PM">
              Me avisas si vienes en carro o moto<br />para el parquiadero amor
            </Bubble>
            <Bubble time="12:45 PM">
              Que color de lencería es tu favorito<br />amor
            </Bubble>
            <div className="mt-[26px] flex justify-end pr-[30px]">
              <div className="h-[240px] w-[837px] rounded-l-[36px] bg-[#d9fdd3] p-3 pr-0">
                <div className="mr-3 flex h-[120px] overflow-hidden rounded-[27px] bg-[#d4f2cd]">
                  <div className="w-3 bg-[#5e47de]" />
                </div>
              </div>
              <svg viewBox="0 0 21 40" className="h-[40px] w-[21px]" aria-hidden="true">
                <path d="M0 0 H17 Q24 2 19 11 L0 36 Z" fill="#d9fdd3" />
              </svg>
            </div>
          </div>
          <button type="button" aria-label="Scroll to latest" className="absolute right-[35px] bottom-[46px] flex h-[98px] w-[98px] items-center justify-center rounded-full bg-[#fafafa]/92 shadow-[0_2px_4px_rgba(0,0,0,0.14)]">
            <svg viewBox="0 0 34 40" className="h-[40px] w-[34px]" fill="none" stroke="#5b6368" strokeWidth="6" strokeLinecap="round" strokeLinejoin="round">
              <path d="M3 4 L17 18 L31 4 M3 22 L17 36 L31 22" />
            </svg>
          </button>
        </main>
        <Composer />
      </div>
    </div>
  );
}
